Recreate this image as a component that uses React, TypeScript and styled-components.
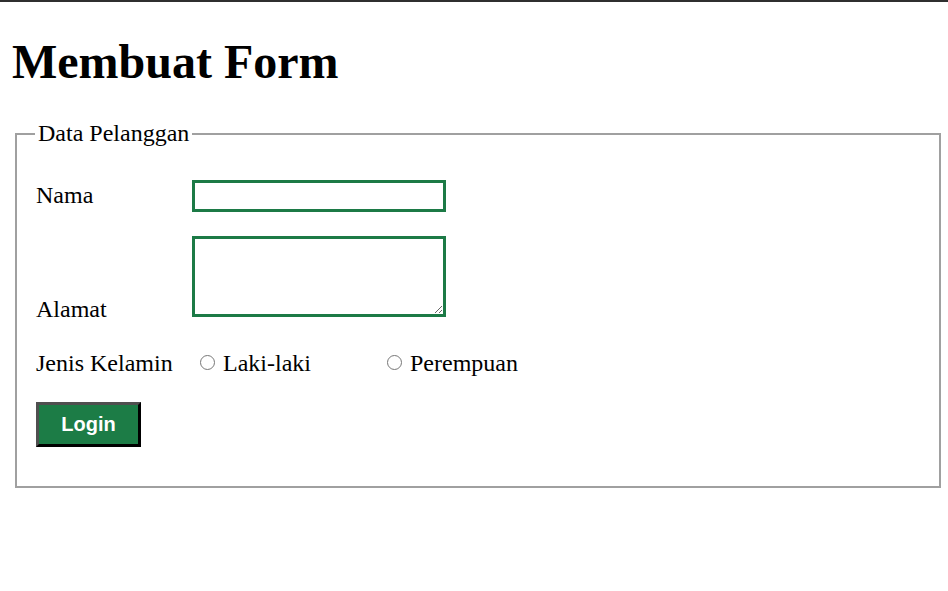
import React from "react";
import styled, { createGlobalStyle } from "styled-components";

const GlobalStyle = createGlobalStyle`
  html, body {
    margin: 0;
    padding: 0;
    background: #fff;
  }
  body {
    font-family: "Liberation Serif", "Times New Roman", serif;
    color: #000;
  }
`;

const TopEdge = styled.div`
  height: 2px;
  background: #2f2f2f;
`;

const Page = styled.main`
  padding: 0 7px 0 12px;
`;

const Title = styled.h1`
  margin: 32px 0 31px 0;
  font-size: 48px;
  font-weight: bold;
  line-height: normal;
`;

const Fieldset = styled.fieldset`
  margin: 0 0 0 3px;
  padding: 8px 18px 15px 18px;
  border: 2px solid #a0a0a0;
  min-width: 0;
`;

const Legend = styled.legend`
  padding: 0 3px;
  font-size: 24px;
  line-height: normal;
`;

const Form = styled.form`
  margin: 25px 0 24px 1px;
`;

const Row = styled.div<{ $gap?: number }>`
  margin-top: ${(p) => p.$gap ?? 24}px;
  font-size: 24px;
  line-height: normal;

  &:first-child {
    margin-top: 0;
  }
`;

const Label = styled.label`
  display: inline-block;
  width: 156px;
`;

const TextInput = styled.input`
  box-sizing: border-box;
  width: 254px;
  height: 32px;
  padding: 1px 2px;
  border: 3px solid #1c7a46;
  font: 20px "Liberation Sans", Arial, sans-serif;
  outline: none;
`;

const TextArea = styled.textarea`
  box-sizing: border-box;
  width: 254px;
  height: 81px;
  padding: 2px;
  margin: 0;
  border: 3px solid #1c7a46;
  font: 16px "Liberation Mono", monospace;
  outline: none;
`;

const Option = styled.label<{ $width?: number }>`
  display: inline-block;
  width: ${(p) => (p.$width ? `${p.$width}px` : "auto")};
`;

const Radio = styled.input`
  appearance: none;
  box-sizing: border-box;
  width: 15px;
  height: 15px;
  margin: 0 2px 1px 8px;
  border: 1.5px solid #777;
  border-radius: 50%;
  background: #fff;
  vertical-align: baseline;

  &:checked {
    background: radial-gradient(circle, #1c7a46 0 3px, #fff 3.5px);
  }
`;

const Button = styled.button`
  box-sizing: border-box;
  width: 105px;
  height: 45px;
  padding: 8px 0;
  border-style: solid;
  border-width: 3px;
  border-color: #4f4f4f #000 #000 #4f4f4f;
  background: #1c7c46;
  color: #fff;
  font: bold 20px "Liberation Sans", Arial, sans-serif;
  line-height: normal;
  cursor: pointer;
`;

export default function App() {
  return (
    <>
      <GlobalStyle />
      <TopEdge />
      <Page>
        <Title>Membuat Form</Title>
        <Fieldset>
          <Legend>Data Pelanggan</Legend>
          <Form onSubmit={(e) => e.preventDefault()}>
            <Row>
              <Label htmlFor="nama">Nama</Label>
              <TextInput id="nama" type="text" />
            </Row>
            <Row>
              <Label htmlFor="alamat">Alamat</Label>
              <TextArea id="alamat" />
            </Row>
            <Row $gap={27}>
              <Label>Jenis Kelamin</Label>
              <Option $width={187}>
                <Radio type="radio" name="jk" value="L" />{" "}Laki-laki
              </Option>
              <Option>
                <Radio type="radio" name="jk" value="P" />{" "}Perempuan
              </Option>
            </Row>
            <Row $gap={25}>
              <Button type="submit">Login</Button>
            </Row>
          </Form>
        </Fieldset>
      </Page>
    </>
  );
}
